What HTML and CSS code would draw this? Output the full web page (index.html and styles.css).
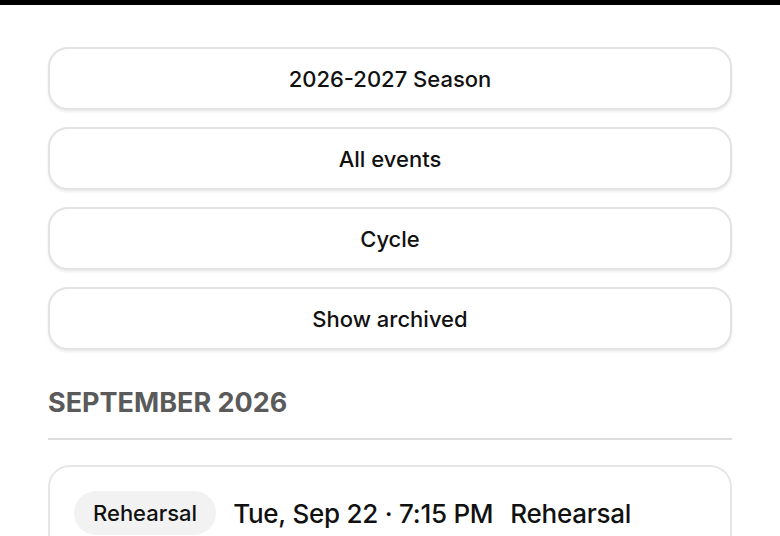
FILE: index.html
```html
<!DOCTYPE html>
<html lang="en">
<head>
<meta charset="UTF-8">
<meta name="viewport" content="width=device-width, initial-scale=1.0">
<title>Events</title>
<link rel="stylesheet" href="styles.css">
</head>
<body>

<div class="topbar"></div>

<div class="page">
    <!-- Фильтры -->
    <div class="filters">
        <button class="filter-btn">2026-2027 Season</button>
        <button class="filter-btn">All events</button>
        <button class="filter-btn">Cycle</button>
        <button class="filter-btn">Show archived</button>
    </div>

    <!-- Месяц -->
    <h2 class="month">SEPTEMBER 2026</h2>

    <div class="event-card">
        <span class="tag">Rehearsal</span>
        <span class="event-date">Tue, Sep 22 · 7:15 PM</span>
        <span class="event-title">Rehearsal</span>
    </div>
</div>

</body>
</html>
```

FILE: styles.css
```css
body {
    margin: 0;
    background-color: #fff;
    font-family: Inter, Lato, sans-serif;
    color: #111;
}
.topbar {
    height: 5px;
    background-color: #000;
}
.page {
    padding: 42px 48px 0;
}
.filters {
    display: flex;
    flex-direction: column;
    gap: 17px;
}
.filter-btn {
    height: 63px;
    background: #fff;
    border: 2px solid #e3e3e3;
    border-radius: 20px;
    box-shadow: 0 2px 3px rgba(0, 0, 0, 0.08);
    font-family: inherit;
    font-size: 22px;
    font-weight: 500;
    color: #111;
    cursor: pointer;
}
.month {
    margin: 36px 0 0;
    padding-bottom: 19px;
    border-bottom: 2px solid #ddd;
    font-size: 27px;
    font-weight: 700;
    color: #5a5a5a;
}
.event-card {
    margin-top: 25px;
    border: 2px solid #e6e6e6;
    border-radius: 22px;
    padding: 24px 24px;
    display: flex;
    align-items: center;
    gap: 17px;
}
.tag {
    background-color: #f2f2f2;
    border-radius: 22px;
    padding: 0 19px;
    height: 44px;
    line-height: 44px;
    font-size: 22px;
    font-weight: 500;
}
.event-date, .event-title {
    font-size: 26px;
    font-weight: 500;
    letter-spacing: -0.25px;
}
```
